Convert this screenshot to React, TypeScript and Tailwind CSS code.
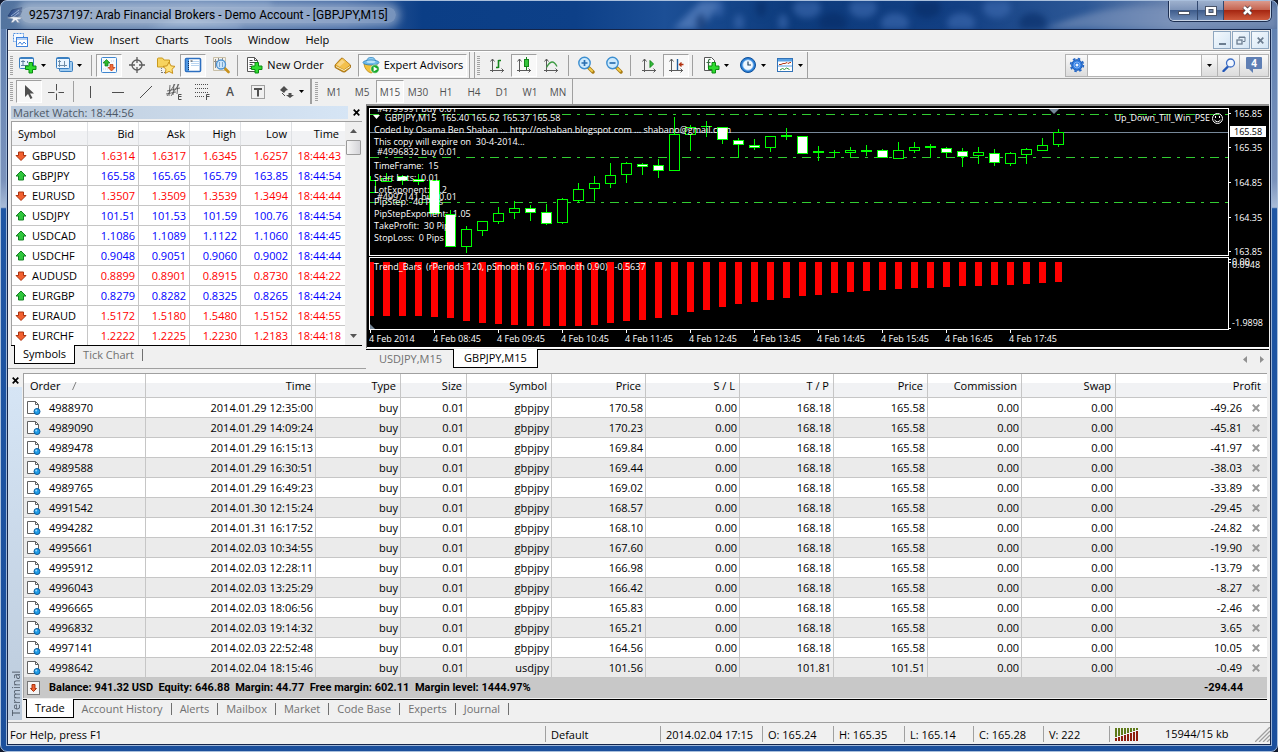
import type { ReactNode } from "react";

/* ---------- data ---------- */

type Quote = [string, "up" | "down", string, string, string, string, string];

const quotes: Quote[] = [
  ["GBPUSD", "down", "1.6314", "1.6317", "1.6345", "1.6257", "18:44:43"],
  ["GBPJPY", "up", "165.58", "165.65", "165.79", "163.85", "18:44:54"],
  ["EURUSD", "down", "1.3507", "1.3509", "1.3539", "1.3494", "18:44:44"],
  ["USDJPY", "up", "101.51", "101.53", "101.59", "100.76", "18:44:54"],
  ["USDCAD", "up", "1.1086", "1.1089", "1.1122", "1.1060", "18:44:45"],
  ["USDCHF", "up", "0.9048", "0.9051", "0.9060", "0.9002", "18:44:44"],
  ["AUDUSD", "down", "0.8899", "0.8901", "0.8915", "0.8730", "18:44:22"],
  ["EURGBP", "up", "0.8279", "0.8282", "0.8325", "0.8265", "18:44:24"],
  ["EURAUD", "down", "1.5172", "1.5180", "1.5480", "1.5152", "18:44:55"],
  ["EURCHF", "down", "1.2222", "1.2225", "1.2230", "1.2183", "18:44:18"],
];

type Order = {
  id: string;
  time: string;
  symbol: string;
  open: string;
  tp: string;
  price: string;
  profit: string;
};

const order = (
  id: string,
  time: string,
  open: string,
  profit: string,
  symbol = "gbpjpy",
  tp = "168.18",
  price = "165.58",
): Order => ({ id, time, symbol, open, tp, price, profit });

const orders: Order[] = [
  order("4988970", "2014.01.29 12:35:00", "170.58", "-49.26"),
  order("4989090", "2014.01.29 14:09:24", "170.23", "-45.81"),
  order("4989478", "2014.01.29 16:15:13", "169.84", "-41.97"),
  order("4989588", "2014.01.29 16:30:51", "169.44", "-38.03"),
  order("4989765", "2014.01.29 16:49:23", "169.02", "-33.89"),
  order("4991542", "2014.01.30 12:15:24", "168.57", "-29.45"),
  order("4994282", "2014.01.31 16:17:52", "168.10", "-24.82"),
  order("4995661", "2014.02.03 10:34:55", "167.60", "-19.90"),
  order("4995912", "2014.02.03 12:28:11", "166.98", "-13.79"),
  order("4996043", "2014.02.03 13:25:29", "166.42", "-8.27"),
  order("4996665", "2014.02.03 18:06:56", "165.83", "-2.46"),
  order("4996832", "2014.02.03 19:14:32", "165.21", "3.65"),
  order("4997141", "2014.02.03 22:52:48", "164.56", "10.05"),
  order("4998642", "2014.02.04 18:15:46", "101.56", "-0.49", "usdjpy", "101.81", "101.51"),
];

/* high, body top, body bottom, low (plot pixels), filled body */
type Candle = [number, number, number, number, 0 | 1];

const candles: Candle[] = [
  [67, 71, 83, 83, 0], [64, 69, 72, 72, 0], [66, 67, 71, 75, 1], [65, 70, 72, 75, 1],
  [71, 71, 104, 104, 1], [101, 105, 137, 137, 1], [117, 120, 137, 143, 0], [112, 112, 121, 126, 0],
  [98, 104, 112, 114, 0], [92, 99, 103, 109, 0], [96, 99, 103, 111, 1], [95, 103, 114, 115, 1],
  [89, 90, 113, 114, 0], [74, 80, 91, 93, 0], [67, 74, 79, 91, 0], [54, 66, 74, 78, 0],
  [53, 54, 65, 73, 0], [54, 55, 57, 65, 1], [50, 56, 61, 68, 1], [8, 25, 61, 61, 0],
  [16, 18, 25, 41, 0], [12, 17, 17, 27, 0], [18, 18, 30, 34, 1], [29, 31, 35, 48, 1],
  [30, 36, 38, 40, 1], [27, 27, 38, 42, 0], [19, 26, 27, 30, 0], [27, 27, 44, 44, 1],
  [37, 42, 43, 51, 0], [41, 43, 43, 48, 0], [38, 41, 43, 48, 0], [36, 41, 42, 46, 0],
  [40, 41, 48, 48, 1], [33, 41, 49, 49, 0], [33, 38, 41, 43, 0], [35, 37, 38, 48, 0],
  [38, 39, 43, 48, 1], [39, 42, 47, 57, 1], [38, 43, 46, 54, 0], [40, 44, 53, 56, 1],
  [43, 44, 54, 56, 0], [39, 40, 45, 54, 0], [29, 36, 41, 41, 0], [20, 23, 35, 37, 0],
];

const trend = [
  54, 54, 54, 54, 55, 56, 59, 61, 62, 63, 64, 64, 64, 64, 63, 61, 59, 58, 56, 53, 50, 48, 45, 42,
  40, 38, 36, 34, 33, 31, 30, 29, 28, 27, 26, 26, 25, 24, 24, 23, 23, 22, 21, 20,
];

const timeLabels = [
  "4 Feb 2014", "4 Feb 08:45", "4 Feb 09:45", "4 Feb 10:45", "4 Feb 11:45", "4 Feb 12:45",
  "4 Feb 13:45", "4 Feb 14:45", "4 Feb 15:45", "4 Feb 16:45", "4 Feb 17:45",
];

const overlay: [number, number, string][] = [
  [7, 3, "#4799991 buy 0.01"],
  [15, 12, "GBPJPY,M15  165.40 165.62 165.37 165.58"],
  [4, 24, "Coded by Osama Ben Shaban ... http://oshaban.blogspot.com ... shabano@gmail.com"],
  [4, 36, "This copy will expire on  30-4-2014..."],
  [7, 46, "#4996832 buy 0.01"],
  [4, 60, "TimeFrame:  15"],
  [4, 72, "Start Lots:  0.01"],
  [4, 84, "LotExponent:  1.2"],
  [7, 91, "#4997141 buy 0.01"],
  [4, 96, "PipStep:  40 Pips"],
  [4, 108, "PipStepExponent:  1.05"],
  [4, 120, "TakeProfit:  30 Pips"],
  [4, 132, "StopLoss:  0 Pips"],
];

/* ---------- icons ---------- */

const Svg = ({ w = 18, h = 18, children }: { w?: number; h?: number; children: ReactNode }) => (
  <svg width={w} height={h} viewBox={`0 0 ${w} ${h}`} fill="none" aria-hidden="true" className="shrink-0">
    {children}
  </svg>
);

const Plus = ({ x, y }: { x: number; y: number }) => (
  <path
    transform={`translate(${x} ${y})`}
    d="M4 .5h3.500V4H11v3.500H7.500V11H4V7.500H.5V4H4z"
    fill="#2fdc2f"
    stroke="#0b8a12"
  />
);

const Caret = () => (
  <Svg w={5} h={3}>
    <path d="M0 0h5L2.500 3z" fill="#000" />
  </Svg>
);

const NewChartIcon = () => (
  <Svg>
    <rect x=".5" y="1.500" width="14" height="11" rx="1" fill="#eaf5ff" stroke="#3a7fc1" />
    <path d="M.5 2.500h14" stroke="#3a7fc1" />
    <path d="M4 4v6M2 5.500h4M2 9.500h7M8.500 5v2" stroke="#5c7f9f" />
    <Plus x={6} y={6} />
  </Svg>
);

const ProfilesIcon = () => (
  <Svg>
    <rect x="4.500" y="5.500" width="13" height="10" rx="1" fill="#9fcbf0" stroke="#3a7fc1" />
    <rect x="1.500" y="1.500" width="13" height="11" rx="1" fill="#eaf5ff" stroke="#3a7fc1" />
    <path d="M1.500 2.500h13" stroke="#3a7fc1" />
    <path d="M4.500 4v7M3 5.500h3M3 9.500h9M9.500 5v6" stroke="#6f8da8" />
  </Svg>
);

const MarketWatchIcon = () => (
  <Svg>
    <rect x="1.500" y="1.500" width="15" height="15" rx="1" fill="#f7fbff" stroke="#3f86cf" />
    <path d="M3 5h3M3 13h5M11 5h4" stroke="#c3d5e6" strokeDasharray="1 1" />
    <path d="M6.500 3.500L10 7H8v3H5V7H3z" fill="#2db82d" stroke="#0c7d14" strokeWidth=".7" />
    <path d="M11.500 15L8 11.500h2v-3h3v3h2z" fill="#f0703c" stroke="#b83108" strokeWidth=".7" />
  </Svg>
);

const DataWindowIcon = () => (
  <Svg>
    <circle cx="9" cy="9" r="5" stroke="#5b5b5b" strokeWidth="1.300" />
    <path d="M9 1v6M9 11v6M1 9h6M11 9h6" stroke="#5b5b5b" strokeWidth="1.300" />
  </Svg>
);

const NavigatorIcon = () => (
  <Svg w={20}>
    <path d="M1.500 11V3q0-1 1-1h4l1.500 2h5.500v7z" fill="#f7d35e" stroke="#c99a1e" />
    <path d="M5.500 12v5M6 16.500h3" stroke="#7b7b7b" strokeDasharray="1 1" />
    <path d="M13 6l1.900 3.800 4.100.6-3 2.900.7 4.100-3.700-2-3.700 2 .7-4.100-3-2.900 4.100-.6z" fill="#ffe27a" stroke="#c8901a" />
  </Svg>
);

const TerminalIcon = () => (
  <Svg>
    <rect x="1.500" y="2.500" width="15" height="13" rx="1" fill="#fff" stroke="#2d6fc0" strokeWidth="1.600" />
    <path d="M2 3h3v12H2z" fill="#4d95e0" />
    <path d="M4.500 5v9" stroke="#0f2d5c" strokeDasharray="1 1" />
    <path d="M7 5.500h8M7 7.500h8M7 9.500h8" stroke="#b9d4ef" />
    <path d="M6.500 5h2" stroke="#333" />
  </Svg>
);

const TesterIcon = () => (
  <Svg>
    <path d="M1.500 14.500V1.500h12v13z" fill="#f5f2ea" stroke="#c8bfa7" />
    <path d="M3.500 3v9M6.500 2v4M10.500 2v3M2 5.500h3" stroke="#8c8c8c" />
    <path d="M12 11.500l4.500 4.500" stroke="#c8921e" strokeWidth="2.600" strokeLinecap="round" />
    <circle cx="9" cy="8.500" r="4.500" fill="#cde6fb" stroke="#4e94d3" strokeWidth="1.300" />
    <path d="M7.500 6v5M10.500 6v5" stroke="#7aa7cd" />
  </Svg>
);

const NewOrderIcon = () => (
  <Svg>
    <path d="M2.500 15.500v-14h7l3 3v11z" fill="#fff" stroke="#565656" />
    <path d="M9.500 1.500v3h3" stroke="#565656" />
    <path d="M4.500 4.500h3M4.500 6.500h6M4.500 8.500h3M4.500 10.500h2M4.500 12.500h2" stroke="#4a4a4a" />
    <Plus x={6} y={6} />
  </Svg>
);

const BookIcon = () => (
  <Svg>
    <path d="M1 9l6-6.500q1-1 2 0L16.500 9v2.500L11 16H9L1 11.500z" fill="#c88f19" stroke="#a06a0c" strokeWidth=".8" />
    <path d="M1.500 9l6-6q1-1 2 0l6.500 6-6 4.500z" fill="#f3c04d" />
    <path d="M3 8.500L8 3.500l3 2.500-5.500 4.500z" fill="#fbe0a0" opacity=".7" />
    <path d="M2 10.500l8 4 6-4" stroke="#fdf1c8" />
  </Svg>
);

const ExpertIcon = () => (
  <Svg>
    <path d="M2 8q1 7 7 9 6-1 6-9z" fill="#f3c23b" stroke="#b98812" strokeWidth=".8" />
    <path d="M4.500 6Q5 1 9 1.500q4-.5 4.500 4z" fill="#8fcdf2" stroke="#3a8cc4" strokeWidth=".8" />
    <ellipse cx="9" cy="6.500" rx="8" ry="2.500" fill="#6db9ea" stroke="#2f7fb8" strokeWidth=".8" />
    <ellipse cx="9" cy="5.800" rx="4.500" ry="1.200" fill="#b9e2f9" />
    <circle cx="13" cy="13" r="4.200" fill="#17a82a" stroke="#fff" strokeWidth=".6" />
    <path d="M11.600 10.500v5l4-2.500z" fill="#fff" />
  </Svg>
);

const Axes = () => (
  <g stroke="#5a5a5a">
    <path d="M4.500 16V3M2 14.500h14" />
    <path d="M2.500 5.500l2-2.500 2 2.500M13.500 12.500l2 2-2 2" />
  </g>
);

const BarsIcon = () => (
  <Svg>
    <Axes />
    <path d="M10.500 4v8M8 11.500h2.500M10.500 4.500H13" stroke="#14851b" strokeWidth="1.600" />
  </Svg>
);

const CandlesIcon = () => (
  <Svg>
    <Axes />
    <path d="M11.500 1v13" stroke="#14851b" />
    <rect x="9.500" y="3.500" width="4" height="7" fill="#35c33a" stroke="#14851b" />
  </Svg>
);

const LineIcon = () => (
  <Svg>
    <Axes />
    <path d="M4.500 11.500Q10 1 15 10.500" stroke="#3c9a42" strokeWidth="1.300" />
  </Svg>
);

const ZoomIcon = ({ plus }: { plus?: boolean }) => (
  <Svg>
    <path d="M11.500 11.500l4.500 4.500" stroke="#a87a12" strokeWidth="3.400" strokeLinecap="round" />
    <path d="M12 12l3.700 3.700" stroke="#f5cf4e" strokeWidth="1.800" />
    <circle cx="7.500" cy="7" r="5.700" fill="#cdeafd" stroke="#3d8fd0" strokeWidth="1.400" />
    <path d={plus ? "M4.500 7h6M7.500 4v6" : "M4.500 7h6"} stroke="#2a6fb0" strokeWidth="1.700" />
  </Svg>
);

const ScrollIcon = () => (
  <Svg>
    <Axes />
    <path d="M10 4.500v7l3.500-3.500z" fill="#35c33a" stroke="#14851b" />
  </Svg>
);

const ShiftIcon = () => (
  <Svg>
    <Axes />
    <path d="M10.500 3v11" stroke="#1f5f9e" strokeWidth="1.400" />
    <path d="M12 8.500h4.500M14.500 6.500l-2 2 2 2" stroke="#b33312" strokeWidth="1.300" />
  </Svg>
);

const IndicatorsIcon = () => (
  <Svg>
    <path d="M2.500 14.500v-13h7l3 3v10z" fill="#fff" stroke="#565656" />
    <path d="M8.500 3.500q-2-.5-2 1.500v7M4.500 6.500h4" stroke="#3c6e46" strokeWidth="1.200" />
    <Plus x={6} y={6} />
  </Svg>
);

const ClockIcon = () => (
  <Svg>
    <circle cx="9" cy="9" r="7.500" fill="#2a7fd6" stroke="#0f4f99" />
    <circle cx="9" cy="9" r="5.300" fill="#f1f8ff" stroke="#7fb8ee" strokeWidth=".8" />
    <path d="M9 5.500V9h3" stroke="#22415f" strokeWidth="1.200" />
  </Svg>
);

const TemplateIcon = () => (
  <Svg>
    <rect x="1.500" y="2.500" width="15" height="13" fill="#fff" stroke="#3172b7" />
    <path d="M2 3h14v2.500H2zM2 9.500h14v1H2z" fill="#5aa2e4" />
    <path d="M3 8.500h2l2-1h2l2-1 1 1 2-1h1" stroke="#b03a18" />
    <path d="M4 14l2.500-1.500 2 1 2-1.500 3 1.500" stroke="#2e9637" />
  </Svg>
);

const ArrowMark = ({ dir }: { dir: "up" | "down" }) => (
  <Svg w={12} h={12}>
    {dir === "up" ? (
      <path d="M6 1l5 5H8.500v4h-5V6H1z" fill="#2fc63c" stroke="#128020" strokeLinejoin="round" />
    ) : (
      <path d="M6 10.500L1 5.500h2.500V2h5v3.500H11z" fill="#f2602f" stroke="#a9330f" strokeLinejoin="round" />
    )}
  </Svg>
);

const OrderIcon = () => (
  <Svg w={16} h={16}>
    <path d="M1.500 13.500v-12h8l3 3v9z" fill="#fff" stroke="#606060" strokeLinejoin="round" />
    <path d="M9.500 1.500v3h3" stroke="#606060" />
    <circle cx="11" cy="11.500" r="3" fill="#1f9be6" stroke="#0c5c9b" />
    <circle cx="10.200" cy="10.600" r="1" fill="#9fdcff" />
  </Svg>
);

const Cross = ({ color = "#000", s = 7 }: { color?: string; s?: number }) => (
  <svg width={s} height={s} viewBox="0 0 7 7" aria-hidden="true">
    <path d="M.7.7l5.600 5.600M6.300.7L.7 6.300" stroke={color} strokeWidth="1.700" />
  </svg>
);

const AppIcon = () => (
  <Svg w={16} h={16}>
    <path d="M1 9L5 3l10-2.500-1.500 4 1.500-.5-2 4-4 2.500z" fill="#2f4f8c" stroke="#1d3565" strokeWidth=".6" />
    <path d="M4 9l8-6M6 10l6-4.500" stroke="#9db7dd" strokeWidth=".8" />
    <path d="M.5 11q5-2 9-1l5 .5-1 1.500-3 .5 2 3h-2l-2-2.500L6 15.500H4L6 12z" fill="#eef2f8" stroke="#7c8ba6" strokeWidth=".6" />
  </Svg>
);

const DocIcon = () => (
  <Svg w={15} h={14}>
    <rect x=".5" y=".5" width="10" height="8" fill="#f5faff" stroke="#4f8fe0" strokeDasharray="2 1" />
    <rect x="3.500" y="4.500" width="11" height="9" fill="#fff" stroke="#3f82dc" />
    <path d="M4 6h10" stroke="#6ea4ea" strokeWidth="1" />
    <path d="M5 11.500l2-2.500 2 2.500 2-2.500 2 2" stroke="#3f82dc" />
  </Svg>
);

/* ---------- toolbar parts ---------- */

const Grip = () => (
  <span className="mx-[2px] h-[19px] w-[3px] shrink-0 bg-[repeating-linear-gradient(to_bottom,#a3a3a3_0_1px,#f0f0f0_1px_2px)]" />
);

const Divider = () => <span className="h-[21px] w-px shrink-0 bg-[#a0a0a0]" />;

const Tool = ({
  label,
  w = "w-7",
  pressed,
  children,
}: {
  label: string;
  w?: string;
  pressed?: boolean;
  children: ReactNode;
}) => (
  <button
    type="button"
    aria-label={label}
    aria-pressed={pressed}
    className={`flex h-[23px] shrink-0 items-center justify-center gap-1 ${w} ${
      pressed ? "border border-[#a0a0a0] border-r-white border-b-white bg-[#f8f8f8]" : ""
    }`}
  >
    {children}
  </button>
);

const TitleBar = () => (
  <header className="relative flex h-[28px] items-center overflow-hidden rounded-t-[7px] bg-[linear-gradient(to_right,#53749f_0,#5b7cab_15%,#3d64a0_27%,#0b3e86_33%,#0d4088_45%,#1c4f96_52%,#0d3b7c_62%,#123f83_75%,#2d5896_85%,#6d86b0_92%,#55719f_100%)] pl-[6px]">
    <svg className="absolute inset-0 h-full w-full blur-[3px]" aria-hidden="true">
      <path d="M130 34l50-18 60 8v14zM20 0h250v5H20z" fill="#86a3cc" opacity=".6" />
      <path d="M670 30l30-30h20l-20 30z" fill="#5d85c2" opacity=".7" />
      {[700, 718, 738, 760, 782, 806, 832, 862, 894, 926, 960, 996, 1032].map((x, i) => (
        <ellipse key={x} cx={x} cy={i % 2 ? 7 : 22} rx={i < 5 ? 5 : 14} ry={i < 5 ? 9 : 10} fill={i % 3 ? "#3f6db2" : "#062c66"} opacity=".6" />
      ))}
      <path d="M1020 40Q1090 0 1170 6l110 0v40z" fill="#8ba0c3" opacity=".5" />
    </svg>
    <div className="relative flex items-center gap-[6px]">
      <AppIcon />
      <h1 className="-mx-2 rounded-full bg-white/40 px-2 font-[Roboto,sans-serif] text-[12px] leading-4 shadow-[0_0_8px_4px_rgba(255,255,255,0.4)]">
        925737197: Arab Financial Brokers - Demo Account - [GBPJPY,M15]
      </h1>
    </div>
    <div className="relative mr-[6px] ml-auto flex h-5 self-start overflow-hidden rounded-b-[5px] border border-t-0 border-[#c8d4e6] ring-1 ring-[#1d2f52]">
      <button type="button" aria-label="Minimize" className="flex w-[28px] items-center justify-center border-r border-[#31486f] bg-[linear-gradient(#9db0cd_0,#7c93b8_48%,#3f5d8d_50%,#6f8bb5_100%)]">
        <span className="mt-1 h-[4px] w-[12px] border border-[#4a5468] bg-white" />
      </button>
      <button type="button" aria-label="Maximize" className="flex w-[26px] items-center justify-center border-r border-[#31486f] bg-[linear-gradient(#9db0cd_0,#7c93b8_48%,#3f5d8d_50%,#6f8bb5_100%)]">
        <Svg w={12} h={10}>
          <rect x=".5" y=".5" width="11" height="9" fill="#fff" stroke="#4a5468" />
          <rect x="4" y="3.500" width="4" height="3" fill="#7189af" stroke="#4a5468" />
        </Svg>
      </button>
      <button type="button" aria-label="Close" className="flex w-[46px] items-center justify-center bg-[linear-gradient(#dc9a8c_0,#c4624e_48%,#a62712_50%,#cf5a3c_100%)]">
        <Svg w={13} h={11}>
          <path d="M3 2l7 7M10 2L3 9" stroke="#4a3a42" strokeWidth="4.200" />
          <path d="M3 2l7 7M10 2L3 9" stroke="#fff" strokeWidth="2.600" />
        </Svg>
      </button>
    </div>
  </header>
);

const MdiButton = ({ label, children }: { label: string; children: ReactNode }) => (
  <button
    type="button"
    aria-label={label}
    className="flex h-[18px] w-[18px] items-center justify-center border border-[#8ea6bf] bg-[linear-gradient(135deg,#f4f9fd,#d5e6f5)]"
  >
    {children}
  </button>
);

const MenuBar = () => (
  <nav className="flex h-[21px] items-center border-b border-[#a0a0a0] pr-px pl-[5px]">
    <DocIcon />
    <ul className="ml-2 flex gap-4">
      {["File", "View", "Insert", "Charts", "Tools", "Window", "Help"].map((m) => (
        <li key={m}>
          <button type="button">{m}</button>
        </li>
      ))}
    </ul>
    <div className="ml-auto flex gap-px">
      <MdiButton label="Minimize chart">
        <span className="mt-2 h-[2px] w-[7px] bg-[#6b7d90]" />
      </MdiButton>
      <MdiButton label="Restore chart">
        <Svg w={10} h={9}>
          <path d="M3 3V1h6v4.500H7M3 1.500h6" stroke="#6b7d90" />
          <rect x="1" y="4" width="5" height="4" stroke="#6b7d90" strokeWidth="1.300" />
        </Svg>
      </MdiButton>
      <MdiButton label="Close chart">
        <Cross color="#6b7d90" />
      </MdiButton>
    </div>
  </nav>
);

const SearchBox = () => (
  <form className="mr-px ml-auto flex h-[23px] items-stretch border border-[#b4b4b4] bg-[linear-gradient(#fafafa,#dcdcdc)]">
    <button type="button" aria-label="Settings" className="flex w-[22px] items-center justify-center border-r border-[#b4b4b4]">
      <Svg w={16} h={16}>
        <circle cx="8" cy="8" r="5.300" fill="#2f7be0" stroke="#1a57b0" />
        <circle cx="8" cy="8" r="6.400" stroke="#2467c7" strokeWidth="1.600" strokeDasharray="2.500 2.530" />
        <circle cx="8" cy="8" r="3" stroke="#7fb2f5" />
        <circle cx="8" cy="8" r="1.500" fill="#eef5ff" />
      </Svg>
    </button>
    <input type="text" aria-label="Search" className="w-[113px] bg-white px-1 outline-none" />
    <button type="button" aria-label="Search history" className="flex w-[17px] items-center justify-center border-x border-[#b4b4b4]">
      <Caret />
    </button>
    <button type="button" aria-label="Find" className="flex w-[22px] items-center justify-center border-r border-[#b4b4b4]">
      <Svg w={14} h={14}>
        <path d="M6 8.500L1.500 13" stroke="#2257b8" strokeWidth="2.400" strokeLinecap="round" />
        <circle cx="8.500" cy="5" r="4" fill="#f2f7ff" stroke="#3f6fc4" strokeWidth="1.300" />
      </Svg>
    </button>
    <button type="button" aria-label="Messages" className="flex w-[28px] items-center justify-center">
      <span className="relative mb-1 flex h-[12px] w-4 items-center justify-center rounded-[1px] bg-[#5f7fb4] text-[10px] leading-3 font-bold text-white">
        4
        <svg className="absolute top-[12px] left-[3px]" width="4" height="4" aria-hidden="true">
          <path d="M0 0h4v4z" fill="#5f7fb4" />
        </svg>
      </span>
    </button>
  </form>
);

const MainToolbar = () => (
  <div className="flex h-[27px] items-center border-t border-white">
    <Grip />
    <Tool label="New chart" w="w-[35px]"><NewChartIcon /><Caret /></Tool>
    <Tool label="Profiles" w="w-[36px]"><ProfilesIcon /><Caret /></Tool>
    <span className="w-[5px]" />
    <Divider />
    <span className="w-[4px]" />
    <Tool label="Market Watch" w="w-[26px]" pressed><MarketWatchIcon /></Tool>
    <Tool label="Data Window" w="w-[29px]"><DataWindowIcon /></Tool>
    <Tool label="Navigator" w="w-[29px]"><NavigatorIcon /></Tool>
    <Tool label="Terminal" w="w-[26px]" pressed><TerminalIcon /></Tool>
    <Tool label="Strategy Tester" w="w-[29px]"><TesterIcon /></Tool>
    <span className="w-[2px]" />
    <Divider />
    <Tool label="New Order" w="w-[93px]"><NewOrderIcon />New Order</Tool>
    <Tool label="MetaEditor" w="w-[24px]"><BookIcon /></Tool>
    <span className="w-[3px]" />
    <Tool label="Expert Advisors" w="w-[109px]" pressed><ExpertIcon />Expert Advisors</Tool>
    <span className="ml-[2px] h-[26px] w-px bg-[#a0a0a0]" />
    <span className="ml-[4px] h-[26px] w-px bg-[#a0a0a0]" />
    <Grip />
    <span className="w-px" />
    <Tool label="Bar chart"><BarsIcon /></Tool>
    <Tool label="Candlesticks" w="w-[26px]" pressed><CandlesIcon /></Tool>
    <Tool label="Line chart"><LineIcon /></Tool>
    <span className="w-[3px]" />
    <Divider />
    <span className="w-[3px]" />
    <Tool label="Zoom in"><ZoomIcon plus /></Tool>
    <Tool label="Zoom out"><ZoomIcon /></Tool>
    <span className="w-[2px]" />
    <Divider />
    <span className="w-[4px]" />
    <Tool label="Auto scroll"><ScrollIcon /></Tool>
    <Tool label="Chart shift" w="w-[26px]" pressed><ShiftIcon /></Tool>
    <span className="w-[3px]" />
    <Divider />
    <span className="w-[4px]" />
    <Tool label="Indicators" w="w-9"><IndicatorsIcon /><Caret /></Tool>
    <Tool label="Periods" w="w-[38px]"><ClockIcon /><Caret /></Tool>
    <Tool label="Templates" w="w-[36px]"><TemplateIcon /><Caret /></Tool>
    <span className="h-[26px] w-px bg-[#a0a0a0]" />
    <SearchBox />
  </div>
);

const DrawToolbar = () => (
  <div className="flex h-[26px] items-center border-t border-[#a0a0a0] text-[10px] text-[#505050]">
    <Grip />
    <span className="w-px" />
    <Tool label="Cursor" w="w-[26px]" pressed>
      <Svg w={12} h={16}>
        <path d="M2 1v12l3-3 2.500 5 2-1L7 9.500h4z" fill="#4f4f4f" />
      </Svg>
    </Tool>
    <Tool label="Crosshair">
      <Svg w={16} h={16}><path d="M8.500 0v6.500M8.500 9.500V16M0 8.500h6.500M10.500 8.500H16" stroke="#4f4f4f" /></Svg>
    </Tool>
    <span className="w-[3px]" />
    <Divider />
    <span className="w-[2px]" />
    <Tool label="Vertical line"><Svg w={12} h={14}><path d="M6.500 1v12" stroke="#4f4f4f" /></Svg></Tool>
    <Tool label="Horizontal line"><Svg w={14} h={14}><path d="M1 7.500h12" stroke="#4f4f4f" /></Svg></Tool>
    <Tool label="Trendline"><Svg w={14} h={14}><path d="M1 13L13 1" stroke="#4f4f4f" /></Svg></Tool>
    <Tool label="Equidistant channel">
      <Svg w={17} h={17}>
        <path d="M1 13L9 1M5 13l8-12M1 8l13-3M0 11l10-2M4 2L3 13M8 1L7 12M12 1l-1 10" stroke="#4f4f4f" strokeWidth=".8" />
        <path d="M15.500 11.500h-3v5h3M12.500 13.500h3" stroke="#4f4f4f" />
      </Svg>
    </Tool>
    <Tool label="Fibonacci retracement">
      <Svg w={17} h={17}>
        <path d="M1 1.500h13M1 5.500h13M1 9.500h13M1 13.500h9" stroke="#4f4f4f" strokeDasharray="1 1" />
        <path d="M15.500 11.500h-3V17M12.500 13.500h3" stroke="#4f4f4f" />
      </Svg>
    </Tool>
    <Tool label="Text"><span className="text-[12px] font-semibold">A</span></Tool>
    <Tool label="Text label">
      <Svg w={14} h={14}>
        <rect x=".5" y=".5" width="13" height="13" stroke="#4f4f4f" strokeDasharray="1 1" />
        <path d="M3 4h8M7 4v7.500" stroke="#4f4f4f" strokeWidth="2" />
      </Svg>
    </Tool>
    <Tool label="Arrows" w="w-[38px]">
      <Svg w={16} h={14}>
        <path d="M5 1l4 4-2 .5L5 8 1 5z" fill="#4f4f4f" />
        <path d="M11 13l-4-3h2.500V8h3v2H15z" fill="#4f4f4f" />
        <path d="M3 8l3 3" stroke="#4f4f4f" />
      </Svg>
      <Caret />
    </Tool>
    <span className="h-[25px] w-[2px] bg-[#a0a0a0]" />
    <span className="w-px" />
    <Grip />
    {["M1", "M5", "M15", "M30", "H1", "H4", "D1", "W1", "MN"].map((p) => (
      <Tool key={p} label={p} pressed={p === "M15"}>{p}</Tool>
    ))}
    <span className="h-[25px] w-px bg-[#a0a0a0]" />
  </div>
);

/* ---------- market watch ---------- */

const TabButton = ({ active, pad = "px-2", children }: { active?: boolean; pad?: string; children: ReactNode }) =>
  active ? (
    <button type="button" className={`-mt-px h-[19px] border-x border-b border-x-black border-b-black bg-white text-black ${pad}`}>
      {children}
    </button>
  ) : (
    <button type="button" className={`h-[18px] text-[#707070] ${pad}`}>
      {children}
    </button>
  );

const MarketWatch = () => (
  <section className="w-[358px] shrink-0 border-b border-[#a0a0a0] pt-[2px] pl-[3px]">
    <div className="flex h-[13px] items-center pr-[6px]">
      <h2 className="mr-auto w-[337px] bg-[linear-gradient(to_right,#bccbdc,#d6e5f5)] pl-[2px] leading-[13px] text-[#4d5866]">
        Market Watch: 18:44:56
      </h2>
      <button type="button" aria-label="Close Market Watch"><Cross /></button>
    </div>
    <div className="mt-[2px] mr-1 flex h-[224px] overflow-hidden border-t border-l border-[#a0a0a0]">
      <table className="w-[333px] table-fixed border-separate border-spacing-0 bg-white">
        <colgroup>
          <col className="w-[76px]" />
          <col className="w-[51px]" />
          <col className="w-[51px]" />
          <col className="w-[51px]" />
          <col className="w-[51px]" />
          <col />
        </colgroup>
        <thead>
          <tr className="h-[24px]">
            {["Symbol", "Bid", "Ask", "High", "Low", "Time"].map((h, i) => (
              <th
                key={h}
                scope="col"
                className={`border-b border-[#c6c6c6] bg-[linear-gradient(#fff_40%,#f1f2f4_41%,#f1f2f4)] p-0 font-normal ${
                  i === 0 ? "border-r border-r-[#dfe1e4] pl-[6px] text-left" : i < 5 ? "border-r border-r-[#dfe1e4] pr-1 text-right" : "pr-[6px] text-right"
                }`}
              >
                {h}
              </th>
            ))}
          </tr>
        </thead>
        <tbody>
          {quotes.map(([symbol, dir, ...cells]) => (
            <tr key={symbol} className="h-5">
              <td className="border-r border-b border-[#c6c6c6] p-0">
                <span className="flex items-center gap-[5px] pl-[3px]">
                  <ArrowMark dir={dir} />
                  {symbol}
                </span>
              </td>
              {cells.map((c, i) => (
                <td
                  key={i}
                  className={`border-b border-[#c6c6c6] p-0 text-right ${i < 4 ? "border-r pr-[3px]" : "pr-1"} ${
                    dir === "up" ? "text-[#0000ff]" : "text-[#ff0000]"
                  }`}
                >
                  {c}
                </td>
              ))}
            </tr>
          ))}
        </tbody>
      </table>
      <div className="flex w-[17px] flex-col items-center bg-[#efefef]" aria-hidden="true">
        <Svg w={7} h={18}><path d="M3.500 7L7 11H0z" fill="#555" /></Svg>
        <span className="h-[15px] w-[15px] rounded-[1px] border border-[#9a9a9a] bg-[linear-gradient(to_right,#f6f6f6,#d4d4d8)]" />
        <span className="mt-auto"><Svg w={7} h={18}><path d="M3.500 11L7 7H0z" fill="#555" /></Svg></span>
      </div>
    </div>
    <div className="mr-1 flex h-[22px] border-t border-black pl-[3px]">
      <TabButton active>Symbols</TabButton>
      <TabButton>Tick Chart</TabButton>
      <span className="mt-[3px] h-3 w-px bg-[#707070]" />
    </div>
  </section>
);

/* ---------- chart ---------- */

const PricePlot = () => (
  <div className="h-[148px] overflow-hidden border border-white">
    <svg className="block h-full w-full" role="img" aria-label="GBPJPY M15 price chart">
      <g shapeRendering="crispEdges">
        {[5, 48, 93].map((y) => (
          <line key={y} x1="0" x2="100%" y1={y + 0.5} y2={y + 0.5} stroke="#32cd32" strokeDasharray="9 6 3 6" />
        ))}
        <line x1="0" x2="100%" y1="23.500" y2="23.500" stroke="#778899" />
      </g>
      {candles.map(([high, top, bottom, low, filled], i) => {
        const x = i * 16 + 0.5;
        return (
          <g key={i} stroke="#00ff00" shapeRendering="crispEdges">
            <line x1={x} x2={x} y1={high} y2={low + 1} />
            {bottom - top < 2 ? (
              <line x1={x - 5.5} x2={x + 5.5} y1={(top + bottom + 1) / 2} y2={(top + bottom + 1) / 2} strokeWidth={bottom - top + 1} />
            ) : (
              <rect x={x - 5} y={top + 0.5} width="10" height={bottom - top} fill={filled ? "#fff" : "#000"} />
            )}
          </g>
        );
      })}
      <g fill="#fff">
        {overlay.map(([x, y, t]) => (
          <text key={y} x={x} y={y} className="whitespace-pre">{t}</text>
        ))}
      </g>
      <path d="M3 6h7l-3.500 4z" fill="#fff" />
      <svg x="100%" overflow="visible">
        <path d="M-179 0h10l-5 5z" fill="#778899" />
        <text x="-18" y="12" fill="#fff" textAnchor="end">Up_Down_Till_Win_PSE</text>
        <g fill="none" stroke="#fff">
          <circle cx="-10.500" cy="9.500" r="5" />
          <path d="M-13.500 11q3 3.500 6 0M-12.500 7v2M-8.500 7v2" />
        </g>
      </svg>
    </svg>
  </div>
);

const TrendPlot = () => (
  <div className="mt-px h-[73px] overflow-hidden border border-white">
    <svg className="block h-full w-full" role="img" aria-label="Trend bars indicator">
      {trend.map((h, i) => (
        <rect key={i} x={i * 16 - 3} y="4" width="7" height={h} fill="#f00" />
      ))}
      <text x="4" y="12" fill="#fff" className="whitespace-pre">
        {"Trend_Bars  (rPeriods 120, pSmooth 0.67, iSmooth 0.90)   -0.5637"}
      </text>
      <path d="M0 66l5 5H0z" fill="#778899" />
    </svg>
  </div>
);

const PriceAxis = () => (
  <svg className="h-[239px] w-[40px] shrink-0" role="img" aria-label="Price scale">
    <path d="M0 5.500h2M0 39.500h2M0 74.500h2M0 109.500h2M0 143.500h2M0 151.500h2M0 154.500h2M0 220.500h2" stroke="#fff" />
    <g fill="#fff">
      <text x="5" y="9">165.85</text>
      <text x="5" y="43">165.35</text>
      <text x="5" y="78">164.85</text>
      <text x="5" y="113">164.35</text>
      <text x="5" y="147">163.85</text>
      <text x="3" y="157">0.00</text>
      <text x="3" y="160">0.0948</text>
      <text x="3" y="218">-1.9898</text>
    </g>
    <rect x="1" y="18" width="36" height="11" fill="#fff" />
    <text x="5" y="27" fill="#000">165.58</text>
  </svg>
);

const Chart = () => (
  <section className="min-w-0 flex-1 pr-px">
    <div className="border-t-2 border-l border-[#707070] border-t-[#909090]">
      <div className="flex h-[242px] overflow-hidden border-b border-white bg-black pt-[2px] pl-[2px] text-[9px]">
        <div className="min-w-0 flex-1">
          <PricePlot />
          <TrendPlot />
          <svg className="block h-[17px] w-full" role="img" aria-label="Time scale">
            {timeLabels.map((t, i) => (
              <g key={t}>
                <path d={`M${i * 64 + 1.5} 0v3`} stroke="#fff" />
                <text x={i * 64} y="12" fill="#fff">{t}</text>
              </g>
            ))}
          </svg>
        </div>
        <PriceAxis />
      </div>
    </div>
    <div className="mt-px flex h-[20px] border-t border-black pl-[2px]">
      <TabButton pad="px-[11px]">USDJPY,M15</TabButton>
      <TabButton active pad="px-[10px]">GBPJPY,M15</TabButton>
      <div className="mr-1 ml-auto flex items-center gap-3">
        <button type="button" aria-label="Scroll tabs left"><Svg w={5} h={7}><path d="M4 0v7L0 3.500z" fill="#909090" /></Svg></button>
        <button type="button" aria-label="Scroll tabs right"><Svg w={5} h={7}><path d="M0 0v7l4-3.500z" fill="#909090" /></Svg></button>
      </div>
    </div>
  </section>
);

/* ---------- terminal ---------- */

const headers = ["Time", "Type", "Size", "Symbol", "Price", "S / L", "T / P", "Price", "Commission", "Swap"];

const Terminal = () => (
  <section className="flex pr-[3px]">
    <div className="flex w-[14px] shrink-0 flex-col items-center">
      <button type="button" aria-label="Close Terminal" className="flex h-[14px] items-center"><Cross /></button>
      <h2 className="flex w-full flex-1 rotate-180 items-center bg-[linear-gradient(#bccbdc,#d6e5f5)] pt-1 leading-[13px] text-[#4d5866] [writing-mode:vertical-rl]">
        Terminal
      </h2>
    </div>
    <div className="ml-px min-w-0 flex-1">
      <table className="w-full table-fixed border-separate border-spacing-0 border-t border-l border-[#a0a0a0] bg-white">
        <colgroup>
          <col className="w-[122px]" />
          <col className="w-[170px]" />
          <col className="w-[85px]" />
          <col className="w-[66px]" />
          <col className="w-[85px]" />
          <col className="w-[94px]" />
          <col className="w-[94px]" />
          <col className="w-[94px]" />
          <col className="w-[94px]" />
          <col className="w-[94px]" />
          <col className="w-[94px]" />
          <col />
        </colgroup>
        <thead>
          <tr className="h-[24px] [&>th]:border-b [&>th]:border-[#c6c6c6] [&>th]:bg-[linear-gradient(#fff_40%,#f1f2f4_41%,#f1f2f4)] [&>th]:p-0 [&>th]:font-normal">
            <th scope="col" className="border-r border-r-[#dfe1e4] text-left">
              <span className="flex items-center gap-3 pl-[6px]">
                Order
                <Svg w={7} h={8}><path d="M.5 8L4 0" stroke="#808080" /></Svg>
              </span>
            </th>
            {headers.map((h, i) => (
              <th key={i} scope="col" className="border-r border-r-[#dfe1e4] text-right">
                <span className="pr-1">{h}</span>
              </th>
            ))}
            <th scope="col" className="text-right"><span className="pr-[6px]">Profit</span></th>
          </tr>
        </thead>
        <tbody>
          {orders.map((o) => (
            <tr key={o.id} className="h-5 even:bg-[#ebebeb] [&>td]:border-b [&>td]:border-[#c6c6c6] [&>td]:p-0">
              <td className="border-r">
                <span className="flex items-center gap-[7px] pl-[2px]">
                  <OrderIcon />
                  {o.id}
                </span>
              </td>
              {[o.time, "buy", "0.01", o.symbol, o.open, "0.00", o.tp, o.price, "0.00", "0.00"].map((c, i) => (
                <td key={i} className="border-r text-right">
                  <span className="pr-[2px]">{c}</span>
                </td>
              ))}
              <td>
                <span className="flex items-center justify-end gap-[10px] pr-[7px]">
                  {o.profit}
                  <button type="button" aria-label={`Close order ${o.id}`}><Cross color="#999" s={8} /></button>
                </span>
              </td>
            </tr>
          ))}
        </tbody>
      </table>
      <div className="flex h-[20px] items-center border-l border-[#a0a0a0] bg-[#c8c8c8] pr-[24px] pl-[3px] font-[Roboto,sans-serif] font-bold">
        <span className="flex h-[14px] w-[13px] items-center justify-center border border-[#777] bg-[#f4f4f4]">
          <svg width="7" height="8" viewBox="0 0 7 8" aria-hidden="true">
            <path d="M3.500 7.500L.5 4.500h1.500v-4h3v4h1.500z" fill="#f2602f" stroke="#a9330f" />
          </svg>
        </span>
        <span className="ml-[9px] whitespace-pre">
          {"Balance: 941.32 USD  Equity: 646.88  Margin: 44.77  Free margin: 602.11  Margin level: 1444.97%"}
        </span>
        <span className="ml-auto">-294.44</span>
      </div>
      <div className="mt-px flex h-[21px] items-start border-t border-black pl-[3px]">
        <TabButton active>Trade</TabButton>
        {["Account History", "Alerts", "Mailbox", "Market", "Code Base", "Experts", "Journal"].map((t) => (
          <span key={t} className="flex items-center">
            <TabButton>{t}</TabButton>
            <span className="h-3 w-px bg-[#707070]" />
          </span>
        ))}
      </div>
    </div>
  </section>
);

const StatusBar = () => (
  <footer className="flex h-[22px] items-stretch border-t border-[#a0a0a0] pt-px [&>span]:my-[2px] [&>span]:leading-[18px] [&>span+span]:border-l [&>span+span]:border-[#a0a0a0] [&>span+span]:pl-[5px]">
    <span className="flex-1 pl-[2px]">For Help, press F1</span>
    <span className="w-[115px]">Default</span>
    <span className="w-[102px]">2014.02.04 17:15</span>
    <span className="w-[71px]">O: 165.24</span>
    <span className="w-[71px]">H: 165.35</span>
    <span className="w-[69px]">L: 165.14</span>
    <span className="w-[70px]">C: 165.28</span>
    <span className="w-[66px]">V: 222</span>
    <span className="flex w-[161px] items-center gap-[26px]">
      <Svg w={24} h={13}>
        {[0, 1, 2, 3, 4, 5, 6, 7].map((i) => (
          <g key={i}>
            <rect x={i * 3} y="0" width="2" height={9 - i} fill="#5e7a18" />
            <rect x={i * 3} y={10 - i} width="2" height={3 + i} fill="#8e1d0d" />
          </g>
        ))}
      </Svg>
      15944/15 kb
      <span className="ml-auto self-end">
        <Svg w={15} h={15}><path d="M0 15L15 0M4 15L15 4M8 15l7-7M12 15l3-3" stroke="#a0a0a0" strokeWidth="1.300" /></Svg>
      </span>
    </span>
  </footer>
);

export default function App() {
  return (
    <div className="flex min-h-screen flex-col bg-[#10182c] font-['Open_Sans','Noto_Sans',sans-serif] text-[11px] leading-[14px] text-black">
      <div className="flex flex-1 flex-col rounded-[7px] border border-[#a9bfdc] bg-[linear-gradient(#5d7fb0_0,#7b93bc_24%,#a9bcd8_27.500%,#1f56a4_27.700%,#1b4f9c_100%)]">
        <TitleBar />
        <div className="mx-[6px] mb-[6px] flex flex-1 flex-col border border-[#14254a] bg-[#f0f0f0] ring-1 ring-[#9db6d8]">
          <MenuBar />
          <MainToolbar />
          <DrawToolbar />
          <div className="flex">
            <MarketWatch />
            <Chart />
          </div>
          <div className="h-[4px]" />
          <Terminal />
          <div className="mt-auto">
            <StatusBar />
          </div>
        </div>
      </div>
    </div>
  );
}
